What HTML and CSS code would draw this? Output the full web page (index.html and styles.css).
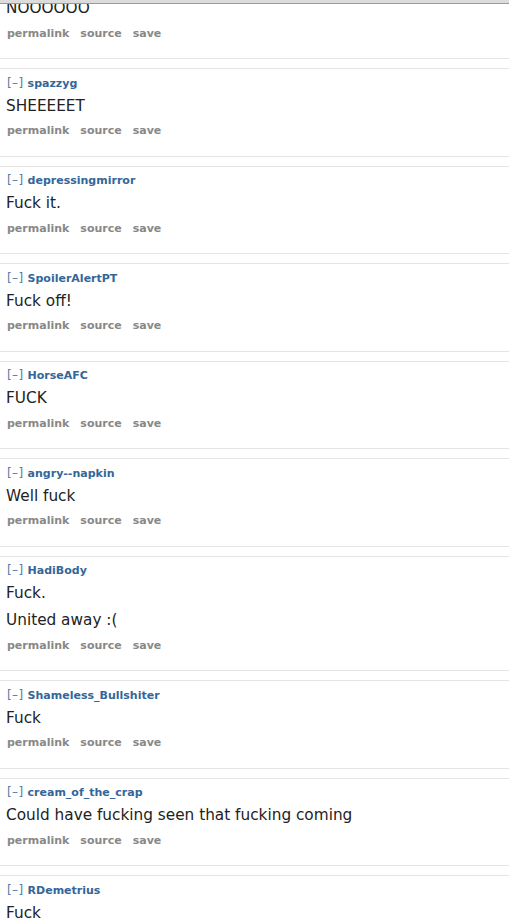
FILE: index.html
```html
<!DOCTYPE html>
<html>
<head>
<meta charset="utf-8">
<link rel="stylesheet" href="styles.css">
</head>
<body>
<div class="topbar"></div>
<div class="list">
  <div class="comment first">
    <div class="body"><p>NOOOOOO</p></div>
    <ul class="buttons"><li>permalink</li><li>source</li><li>save</li></ul>
  </div>
  <div class="comment">
    <div class="tagline"><span class="expand">[–]</span><span class="author">spazzyg</span></div>
    <div class="body"><p>SHEEEEET</p></div>
    <ul class="buttons"><li>permalink</li><li>source</li><li>save</li></ul>
  </div>
  <div class="comment">
    <div class="tagline"><span class="expand">[–]</span><span class="author">depressingmirror</span></div>
    <div class="body"><p>Fuck it.</p></div>
    <ul class="buttons"><li>permalink</li><li>source</li><li>save</li></ul>
  </div>
  <div class="comment">
    <div class="tagline"><span class="expand">[–]</span><span class="author">SpoilerAlertPT</span></div>
    <div class="body"><p>Fuck off!</p></div>
    <ul class="buttons"><li>permalink</li><li>source</li><li>save</li></ul>
  </div>
  <div class="comment">
    <div class="tagline"><span class="expand">[–]</span><span class="author">HorseAFC</span></div>
    <div class="body"><p>FUCK</p></div>
    <ul class="buttons"><li>permalink</li><li>source</li><li>save</li></ul>
  </div>
  <div class="comment">
    <div class="tagline"><span class="expand">[–]</span><span class="author">angry--napkin</span></div>
    <div class="body"><p>Well fuck</p></div>
    <ul class="buttons"><li>permalink</li><li>source</li><li>save</li></ul>
  </div>
  <div class="comment">
    <div class="tagline"><span class="expand">[–]</span><span class="author">HadiBody</span></div>
    <div class="body"><p>Fuck.</p><p>United away :(</p></div>
    <ul class="buttons"><li>permalink</li><li>source</li><li>save</li></ul>
  </div>
  <div class="comment">
    <div class="tagline"><span class="expand">[–]</span><span class="author">Shameless_Bullshiter</span></div>
    <div class="body"><p>Fuck</p></div>
    <ul class="buttons"><li>permalink</li><li>source</li><li>save</li></ul>
  </div>
  <div class="comment">
    <div class="tagline"><span class="expand">[–]</span><span class="author">cream_of_the_crap</span></div>
    <div class="body"><p>Could have fucking seen that fucking coming</p></div>
    <ul class="buttons"><li>permalink</li><li>source</li><li>save</li></ul>
  </div>
  <div class="comment">
    <div class="tagline"><span class="expand">[–]</span><span class="author">RDemetrius</span></div>
    <div class="body"><p>Fuck</p></div>
    <ul class="buttons"><li>permalink</li><li>source</li><li>save</li></ul>
  </div>
</div>
</body>
</html>
```

FILE: styles.css
```css
html, body {
  margin: 0;
  padding: 0;
  background: #ffffff;
  font-family: "DejaVu Sans", Verdana, sans-serif;
  overflow: hidden;
}

.topbar {
  position: fixed;
  top: 0;
  left: 0;
  right: 0;
  height: 3px;
  background: #dcdcdc;
  border-bottom: 1px solid #9a9a9a;
  z-index: 10;
}

.list {
  display: flex;
  flex-direction: column;
  gap: 9px;
}

.comment {
  border-top: 1px solid #e4e4e4;
  border-bottom: 1px solid #e4e4e4;
  padding: 5.5px 0 16.5px 6px;
  display: flex;
  flex-direction: column;
}

.comment.first {
  border-top: none;
  padding-top: 0;
  margin-top: -2px;
}

.tagline {
  font-size: 11px;
  line-height: 16px;
  height: 16px;
  white-space: nowrap;
}

.expand {
  color: #5a7aa0;
  font-size: 12px;
  letter-spacing: 0.4px;
  margin-right: 4px;
  margin-left: 1px;
}

.author {
  color: #336699;
  font-weight: bold;
}

.body {
  display: flex;
  flex-direction: column;
  gap: 7px;
  margin-top: 5px;
}

.comment.first .body {
  margin-top: 0;
}

.body p {
  margin: 0;
  font-size: 15.3px;
  line-height: 20px;
  color: #222222;
}

.buttons {
  list-style: none;
  margin: 7.5px 0 0 0;
  padding: 0 0 0 1px;
  display: flex;
  gap: 11px;
  font-size: 11px;
  line-height: 16px;
  font-weight: bold;
  color: #888888;
}
```
